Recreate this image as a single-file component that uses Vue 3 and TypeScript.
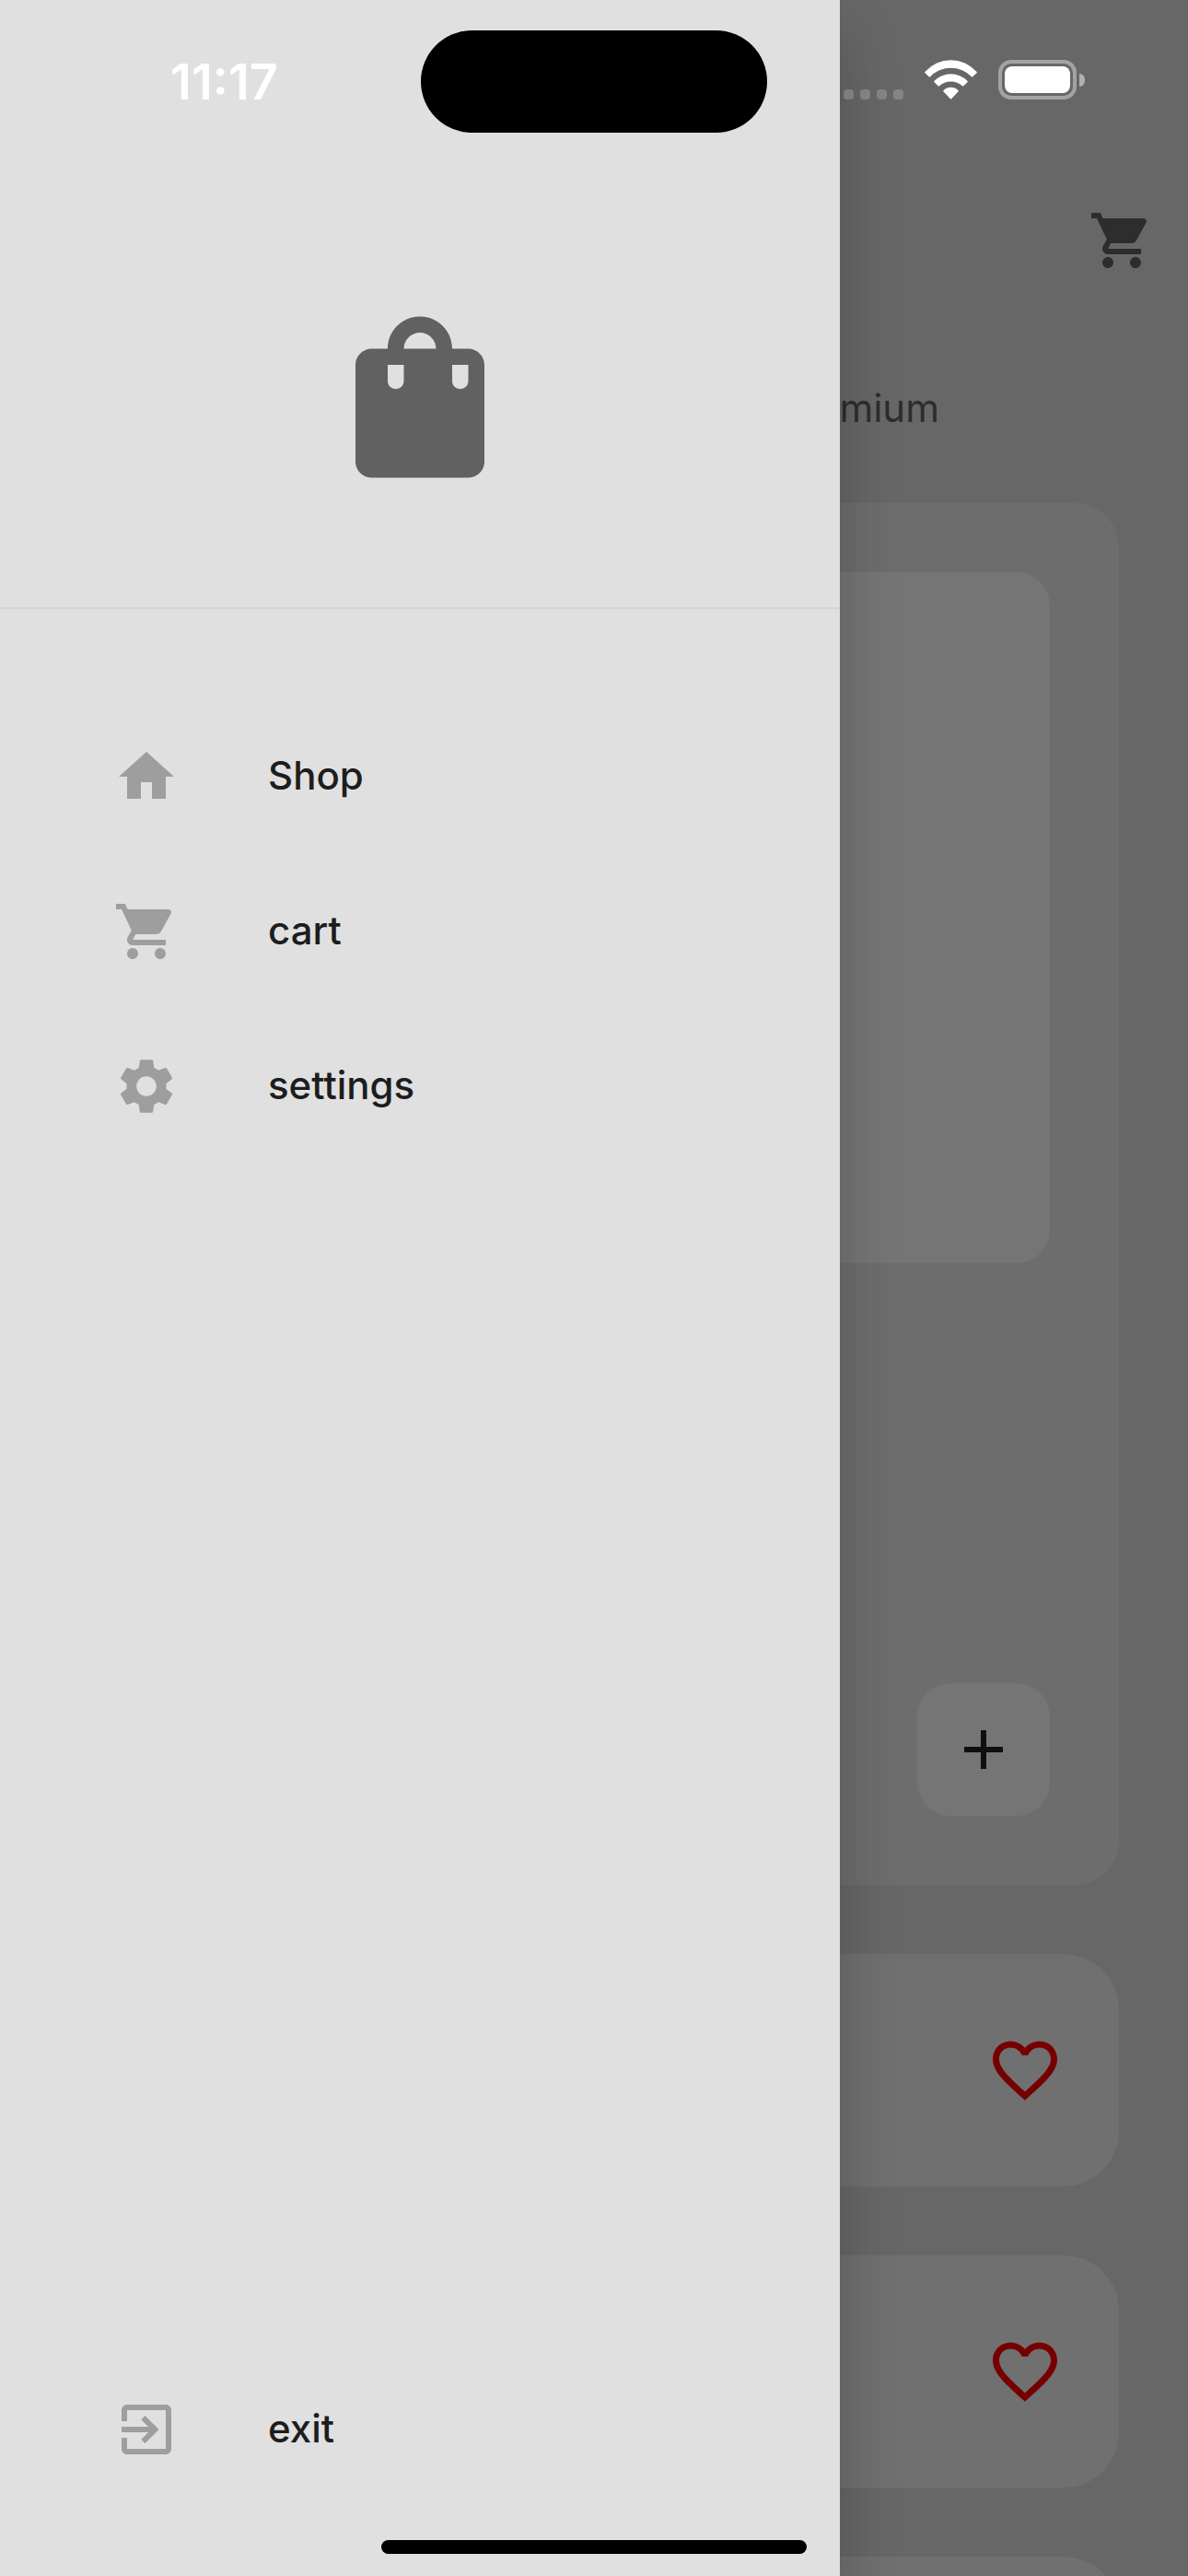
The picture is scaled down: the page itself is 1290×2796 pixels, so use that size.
<script setup lang="ts">
interface MenuItem {
  label: string
  icon: string
}

const icons = {
  home: 'M10 20v-6h4v6h5v-8h3L12 3 2 12h3v8z',
  cart: 'M7 18c-1.1 0-1.99.9-1.99 2S5.9 22 7 22s2-.9 2-2-.9-2-2-2zM1 2v2h2l3.6 7.59-1.35 2.45c-.16.28-.25.61-.25.96 0 1.1.9 2 2 2h12v-2H7.42c-.14 0-.25-.11-.25-.25l.03-.12.9-1.63h7.45c.75 0 1.41-.41 1.75-1.03l3.58-6.49c.08-.14.12-.31.12-.48 0-.55-.45-1-1-1H5.21l-.94-2H1zm16 16c-1.1 0-1.99.9-1.99 2s.89 2 1.99 2 2-.9 2-2-.9-2-2-2z',
  settings:
    'M19.14 12.94c.04-.3.06-.61.06-.94 0-.32-.02-.64-.07-.94l2.03-1.58c.18-.14.23-.41.12-.61l-1.92-3.32c-.12-.22-.37-.29-.59-.22l-2.39.96c-.5-.38-1.03-.7-1.62-.94l-.36-2.54c-.04-.24-.24-.41-.48-.41h-3.84c-.24 0-.43.17-.47.41l-.36 2.54c-.59.24-1.13.57-1.62.94l-2.39-.96c-.22-.08-.47 0-.59.22L2.74 8.87c-.12.21-.08.47.12.61l2.03 1.58c-.05.3-.09.63-.09.94s.02.64.07.94l-2.03 1.58c-.18.14-.23.41-.12.61l1.92 3.32c.12.22.37.29.59.22l2.39-.96c.5.38 1.03.7 1.62.94l.36 2.54c.05.24.24.41.48.41h3.84c.24 0 .44-.17.47-.41l.36-2.54c.59-.24 1.13-.56 1.62-.94l2.39.96c.22.08.47 0 .59-.22l1.92-3.32c.12-.22.07-.47-.12-.61l-2.01-1.58zM12 15.6c-1.98 0-3.6-1.62-3.6-3.6s1.62-3.6 3.6-3.6 3.6 1.62 3.6 3.6-1.62 3.6-3.6 3.6z',
  exit: 'M10.09 15.59 11.5 17l5-5-5-5-1.41 1.41L12.67 11H3v2h9.67l-2.58 2.59zM19 3H5c-1.11 0-2 .9-2 2v4h2V5h14v14H5v-4H3v4c0 1.1.89 2 2 2h14c1.1 0 2-.9 2-2V5c0-1.1-.9-2-2-2z',
  bag: 'M18 6h-2c0-2.21-1.79-4-4-4S8 3.79 8 6H6c-1.1 0-2 .9-2 2v12c0 1.1.9 2 2 2h12c1.1 0 2-.9 2-2V8c0-1.1-.9-2-2-2zm-8 4c0 .55-.45 1-1 1s-1-.45-1-1V8h2v2zm2-6c1.1 0 2 .9 2 2h-4c0-1.1.9-2 2-2zm6 6c0 .55-.45 1-1 1s-1-.45-1-1V8h2v2z',
  heart:
    'M16.5 3c-1.74 0-3.41.81-4.5 2.09C10.91 3.81 9.24 3 7.5 3 4.42 3 2 5.42 2 8.5c0 3.78 3.4 6.86 8.55 11.54L12 21.35l1.45-1.32C18.6 15.36 22 12.28 22 8.5 22 5.42 19.58 3 16.5 3zm-4.4 15.55-.1.1-.1-.1C7.14 14.24 4 11.39 4 8.5 4 6.5 5.5 5 7.5 5c1.54 0 3.04.99 3.57 2.36h1.87C13.46 5.99 14.96 5 16.5 5c2 0 3.5 1.5 3.5 3.5 0 2.89-3.14 5.74-7.9 10.05z',
  plus: 'M19 13h-6v6h-2v-6H5v-2h6V5h2v6h6z',
}

const menu: MenuItem[] = [
  { label: 'Shop', icon: icons.home },
  { label: 'cart', icon: icons.cart },
  { label: 'settings', icon: icons.settings },
]

const tiles: number[] = [1, 2, 3]
</script>

<template>
  <div class="screen">
    <main class="page">
      <header class="app-bar">
        <button class="bare" type="button" aria-label="Open cart">
          <svg class="icon" viewBox="0 0 24 24"><path :d="icons.cart" /></svg>
        </button>
      </header>
      <p class="tagline">premium</p>
      <div class="products">
        <article class="card">
          <div class="photo"></div>
          <button class="add" type="button" aria-label="Add to cart">
            <svg class="icon" viewBox="0 0 24 24"><path :d="icons.plus" /></svg>
          </button>
        </article>
        <article v-for="tile in tiles" :key="tile" class="tile">
          <button class="bare like" type="button" aria-label="Like">
            <svg class="icon-heart" viewBox="0 0 24 24"><path :d="icons.heart" /></svg>
          </button>
        </article>
      </div>
    </main>

    <aside class="drawer">
      <div class="brand">
        <svg class="bag" viewBox="0 0 24 24"><path :d="icons.bag" /></svg>
      </div>
      <nav class="menu">
        <a v-for="item in menu" :key="item.label" class="row" href="#">
          <svg class="icon" viewBox="0 0 24 24"><path :d="item.icon" /></svg>
          <span class="label">{{ item.label }}</span>
        </a>
        <a class="row last" href="#">
          <svg class="icon" viewBox="0 0 24 24"><path :d="icons.exit" /></svg>
          <span class="label">exit</span>
        </a>
      </nav>
    </aside>

    <div class="status">
      <time class="clock">11:17</time>
      <div class="island"></div>
      <div class="indicators">
        <div class="signal"><i v-for="n in 4" :key="n"></i></div>
        <svg class="wifi" viewBox="0 0 171 127">
          <path d="M2 37A112 112 0 0 1 169 37Q172 39 170 41L157 54Q155 56 153 54A94 94 0 0 0 18 54Q16 56 14 54L1 41Q-1 39 2 37Z" />
          <path d="M32 67A76 76 0 0 1 139 67Q142 69 140 71L127 84Q125 86 123 84A55 55 0 0 0 48 84Q46 86 44 84L31 71Q29 69 32 67Z" />
          <path d="M62 98A34 34 0 0 1 109 98Q112 100 110 102L88 125Q86 128 83 125L61 102Q59 100 62 98Z" />
        </svg>
        <div class="battery">
          <div class="cell"><div class="charge"></div></div>
          <div class="nub"></div>
        </div>
      </div>
    </div>
    <div class="home-bar"></div>
  </div>
</template>

<style>
body {
  margin: 0;
  background: #676767;
}
</style>

<style scoped>
.screen {
  position: relative;
  height: 100vh;
  overflow: hidden;
  background: #676767;
  font-family: Inter, "Liberation Sans", sans-serif;
}
svg {
  display: block;
  fill: currentColor;
}
.icon {
  width: 72px;
  height: 72px;
}
.bare {
  padding: 0;
  border: 0;
  background: none;
  color: #2d2d2d;
}

/* shop page under the drawer */
.app-bar {
  display: flex;
  justify-content: flex-end;
  align-items: center;
  height: 168px;
  padding: 177px 36px 0;
}
.tagline {
  margin: 72px 270px 78px 75px;
  color: #2d2d2d;
  font-size: 42px;
  line-height: 51px;
  text-align: right;
}
.products {
  display: flex;
  flex-direction: column;
  gap: 75px;
  padding: 0 75px;
}
.card {
  display: flex;
  flex-direction: column;
  justify-content: space-between;
  align-items: flex-end;
  box-sizing: border-box;
  height: 1500px;
  padding: 75px;
  border-radius: 48px;
  background: #6d6d6d;
}
.photo {
  width: 100%;
  height: 750px;
  border-radius: 36px;
  background: #757575;
}
.add {
  display: grid;
  place-items: center;
  width: 144px;
  height: 144px;
  padding: 0;
  border: 0;
  border-radius: 36px;
  background: #757575;
  color: #0f0f0f;
}
.tile {
  display: flex;
  justify-content: flex-end;
  align-items: center;
  height: 252px;
  padding: 0 60px;
  border-radius: 60px;
  background: #707070;
}
.like {
  color: #760000;
}
.icon-heart {
  width: 84px;
  height: 84px;
}

/* drawer */
.drawer {
  position: absolute;
  inset: 0 auto 0 0;
  display: flex;
  flex-direction: column;
  width: 912px;
  max-width: 85%;
  background: #e0e0e0;
  box-shadow: 0 36px 60px rgba(0, 0, 0, 0.22);
}
.brand {
  display: flex;
  justify-content: center;
  padding: 326px 0 123px;
  border-bottom: 2px solid #d3d3d3;
  color: #616161;
}
.bag {
  width: 210px;
  height: 210px;
}
.menu {
  flex: 1;
  display: flex;
  flex-direction: column;
  padding: 98px 0 75px;
}
.row {
  display: flex;
  align-items: center;
  gap: 96px;
  height: 168px;
  padding: 0 123px;
  color: #1d1d1d;
  font-size: 42px;
  font-weight: 500;
  line-height: 60px;
  text-decoration: none;
}
.row .icon {
  color: #9e9e9e;
}
.label {
  padding-bottom: 3px;
}
.last {
  margin-top: auto;
}

/* system overlay */
.status {
  position: absolute;
  inset: 0 0 auto;
  display: grid;
  grid-template-columns: 1fr 376px 1fr;
  align-items: center;
  height: 177px;
}
.clock {
  padding-left: 30px;
  color: #fff;
  font-size: 54px;
  font-weight: 600;
  line-height: 60px;
  text-align: center;
}
.island {
  height: 111px;
  border-radius: 56px;
  background: #000;
}
.indicators {
  display: flex;
  justify-content: flex-end;
  align-items: flex-end;
  gap: 23px;
  padding: 0 112px 4px 0;
}
.signal {
  display: flex;
  gap: 7px;
}
.signal i {
  width: 11px;
  height: 11px;
  border-radius: 4px;
  background: rgba(255, 255, 255, 0.2);
}
.wifi {
  width: 57px;
  height: 43px;
  color: #fff;
}
.battery {
  display: flex;
  align-items: center;
  gap: 3px;
}
.cell {
  box-sizing: border-box;
  width: 85px;
  height: 43px;
  padding: 3px;
  border: 4px solid #a3a3a3;
  border-radius: 14px;
}
.charge {
  height: 100%;
  border-radius: 8px;
  background: #fff;
}
.nub {
  width: 6px;
  height: 14px;
  border-radius: 0 6px 6px 0;
  background: #b0b0b0;
}
.home-bar {
  position: absolute;
  bottom: 24px;
  left: 50%;
  width: 462px;
  height: 15px;
  margin-left: -231px;
  border-radius: 8px;
  background: #000;
}
</style>
